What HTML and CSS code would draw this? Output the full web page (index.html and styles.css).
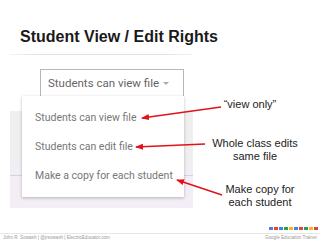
FILE: index.html
```html
<!DOCTYPE html>
<html>
<head>
<meta charset="utf-8">
<link rel="stylesheet" href="styles.css">
</head>
<body>
<div class="slide">
  <h1 class="title">Student View / Edit Rights</h1>
  <div class="rule"></div>
  <div class="stage">
    <div class="panel">
      <div class="select">
        <span>Students can view file</span>
        <span class="caret"></span>
      </div>
      <ul class="menu">
        <li>Students can view file</li>
        <li>Students can edit file</li>
        <li>Make a copy for each student</li>
      </ul>
    </div>
    <div class="notes">
      <p class="note n1">“view only”</p>
      <p class="note n2">Whole class edits<br>same file</p>
      <p class="note n3">Make copy for<br>each student</p>
    </div>
  </div>
  <footer class="footer">
    <div class="dots">
      <i class="b"></i><i class="r"></i><i class="b"></i><i class="g"></i><i class="y"></i><i class="b"></i><i class="r"></i><i class="g"></i><i class="y"></i><i class="r"></i>
    </div>
    <div class="fline"></div>
    <div class="ftext">
      <span>John R. Sowash | @jrsowash | ElectricEducator.com</span>
      <span>Google Education Trainer</span>
    </div>
  </footer>
  <svg class="arrows" width="320" height="240" viewBox="0 0 320 240">
    <defs>
      <marker id="ah" markerWidth="8" markerHeight="6" refX="7" refY="3" orient="auto" markerUnits="userSpaceOnUse">
        <path d="M0,0 L8,3 L0,6 Z" fill="#e3121a"/>
      </marker>
    </defs>
    <line x1="221" y1="107" x2="142" y2="118" stroke="#e3121a" stroke-width="1.6" marker-end="url(#ah)"/>
    <line x1="205" y1="144" x2="136" y2="147" stroke="#e3121a" stroke-width="1.6" marker-end="url(#ah)"/>
    <line x1="222" y1="195" x2="177" y2="180" stroke="#e3121a" stroke-width="1.6" marker-end="url(#ah)"/>
  </svg>
</div>
</body>
</html>
```

FILE: styles.css
```css
* { box-sizing: border-box; }
html, body { margin: 0; padding: 0; background: #fff; }
.slide {
  position: relative;
  width: 320px;
  height: 240px;
  display: flex;
  flex-direction: column;
  font-family: "Liberation Sans", Arial, sans-serif;
  overflow: hidden;
}
.title {
  margin: 27px 0 0 20px;
  font-size: 16px;
  line-height: 19px;
  font-weight: bold;
  color: #1a1a1a;
}
.rule {
  margin: 8px 0 0 10px;
  width: 183px;
  height: 1px;
  background: linear-gradient(to right, #f4f4f4, #e2e2e2 15%, #e2e2e2 85%, #f4f4f4);
}
.stage {
  display: flex;
  margin-top: 14px;
}
.panel {
  margin-left: 10px;
  width: 183px;
  height: 139px;
  background:
    linear-gradient(to bottom, transparent 106px, #d6d2d8 106px, #d6d2d8 107px, transparent 107px),
    linear-gradient(to bottom, #fff 0, #fff 42px, #efefef 42px, #efefef 98px, #f3edf5 98px);
}
.select {
  margin-left: 30px;
  width: 144px;
  height: 27px;
  border: 1px solid #b4b8bc;
  border-bottom: none;
  background: #fff;
  display: flex;
  align-items: center;
  justify-content: space-between;
  padding: 0 14px 0 7px;
  font-family: Roboto, "Liberation Sans", sans-serif;
  font-size: 11.5px;
  color: #666;
}
.caret {
  width: 0;
  height: 0;
  border-left: 3px solid transparent;
  border-right: 3px solid transparent;
  border-top: 3px solid #aaa;
}
.menu {
  list-style: none;
  margin: 0 0 0 12px;
  padding: 7px 0;
  width: 162px;
  background: #fff;
  box-shadow: 0 1px 3px rgba(0,0,0,0.25);
  font-family: Roboto, "Liberation Sans", sans-serif;
  font-size: 10.5px;
  color: #777;
}
.menu li {
  height: 29px;
  line-height: 29px;
  padding-left: 13px;
}
.notes {
  width: 110px;
  margin-left: 7px;
  display: flex;
  flex-direction: column;
}
.note {
  margin: 0;
  font-size: 11px;
  line-height: 13px;
  color: #222;
  text-align: center;
}
.n1 { margin-top: 29px; padding-right: 10px; }
.n2 { margin-top: 26px; }
.n3 { margin-top: 20px; padding-left: 10px; }
.footer {
  margin-top: auto;
}
.dots {
  display: flex;
  justify-content: flex-end;
  gap: 1px;
  padding-right: 2px;
}
.dots i {
  display: block;
  width: 4px;
  height: 3px;
}
.dots .b { background: #4a7ee8; }
.dots .r { background: #e0463a; }
.dots .g { background: #2e9c54; }
.dots .y { background: #f3b815; }
.fline {
  margin-top: 3px;
  height: 1px;
  background: #e6e6e6;
}
.ftext {
  display: flex;
  justify-content: space-between;
  padding: 1px 3px 0;
  height: 6px;
  font-size: 4.6px;
  line-height: 5px;
  color: #999;
}
.arrows {
  position: absolute;
  left: 0;
  top: 0;
  pointer-events: none;
}
```
